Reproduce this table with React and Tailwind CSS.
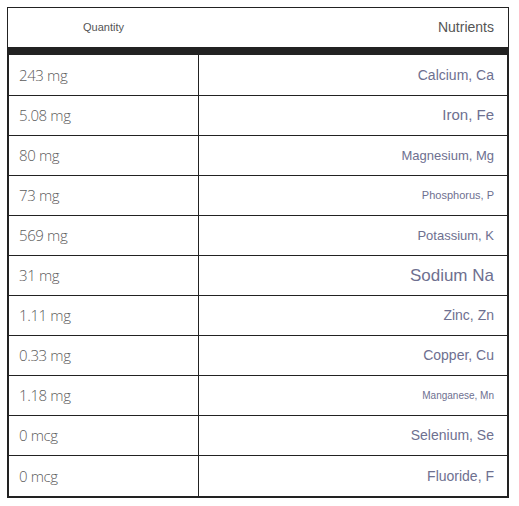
const rows = [
  { qty: "243 mg", name: "Calcium, Ca", size: "text-[14px]" },
  { qty: "5.08 mg", name: "Iron, Fe", size: "text-[15px]" },
  { qty: "80 mg", name: "Magnesium, Mg", size: "text-[13px]" },
  { qty: "73 mg", name: "Phosphorus, P", size: "text-[11px]" },
  { qty: "569 mg", name: "Potassium, K", size: "text-[13px]" },
  { qty: "31 mg", name: "Sodium Na", size: "text-[17px]" },
  { qty: "1.11 mg", name: "Zinc, Zn", size: "text-[14px]" },
  { qty: "0.33 mg", name: "Copper, Cu", size: "text-[14px]" },
  { qty: "1.18 mg", name: "Manganese, Mn", size: "text-[10px]" },
  { qty: "0 mcg", name: "Selenium, Se", size: "text-[14px]" },
  { qty: "0 mcg", name: "Fluoride, F", size: "text-[14px]" },
];

const App = () => {
  return (
    <div className="bg-white w-[519px] h-[506px] pt-[7px] pl-[7px]">
      <div className="w-[502px]">
        {/* header */}
        <div className="flex h-[40px] border-t border-x border-[#222] text-[#555] font-['Liberation_Sans',Arial,sans-serif]">
          <div className="w-[191px] flex items-center justify-center text-[11px]">Quantity</div>
          <div className="flex-1 flex items-center justify-end pr-[14px] text-[14px]">Nutrients</div>
        </div>
        <div className="h-[8px] bg-[#222]" />

        {/* body */}
        <div className="border-x-2 border-b-2 border-[#222]">
          {rows.map((r, i) => (
            <div
              key={i}
              className={`flex ${i === 0 ? "h-[41px]" : "h-[40px]"} ${i < rows.length - 1 ? "border-b border-[#222]" : ""}`}
            >
              <div className="w-[190px] border-r border-[#222] flex items-center pl-[10px] text-[15px] font-light tracking-tight text-[#5c5c5c] font-['Open_Sans',sans-serif]">
                {r.qty}
              </div>
              <div
                className={`flex-1 flex items-center justify-end pr-[13px] text-[#6e7090] font-['Liberation_Sans',Arial,sans-serif] ${r.size}`}
              >
                {r.name}
              </div>
            </div>
          ))}
        </div>
      </div>
    </div>
  );
};

export default App;
